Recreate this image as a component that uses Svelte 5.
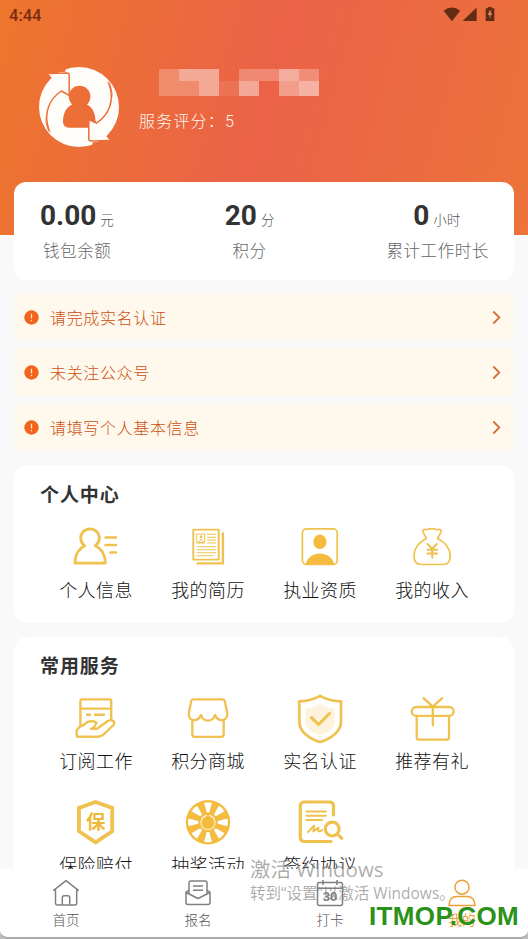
<script>
  const mosaic = [0.24, 0.44, 0.44, 0, 0.24, 0.24, 0.47, 0.27, 0.24, 0.24, 0.44, 0.09, 0.44, 0, 0.37, 0.5];
  const stats = [
    { value: '0.00', unit: '元', label: '钱包余额' },
    { value: '20', unit: '分', label: '积分' },
    { value: '0', unit: '小时', label: '累计工作时长' }
  ];
  const alerts = ['请完成实名认证', '未关注公众号', '请填写个人基本信息'];
  const personal = [
    ['user', '个人信息'], ['resume', '我的简历'], ['badge', '执业资质'], ['money', '我的收入']
  ];
  const services = [
    ['job', '订阅工作'], ['shop', '积分商城'], ['shield', '实名认证'], ['gift', '推荐有礼'],
    ['insure', '保险赔付'], ['wheel', '抽奖活动'], ['contract', '签约协议']
  ];
  const tabs = [['home', '首页'], ['mail', '报名'], ['calendar', '打卡'], ['me', '我的']];
</script>

{#snippet icon(name)}
  <svg class="icon" viewBox="0 0 48 48" width="48" height="48">
    {#if name === 'user'}
      <g stroke-width="2.8">
        <path d="M12.8 22.8A9.3 9.3 0 1 1 23.2 22.8C29.5 25.5 33.2 31.5 33.3 40.2H3C3.1 31.5 6.7 25.5 12.8 22.8" />
        <path d="M33.5 14.5H44M33.5 22H44M38.5 29.5H44" stroke-width="2.4" />
      </g>
    {:else if name === 'resume'}
      <g stroke-width="1.9">
        <rect x="9.3" y="6.6" width="25.4" height="30" />
        <path d="M13.5 40.4H38.9V10.5" stroke-width="2.4" />
        <rect x="13.2" y="11" width="7.5" height="9" stroke-width="1" />
        <circle class="fill" cx="17" cy="13.7" r="1.5" />
        <path d="M14.4 19.2L17 16L19.6 19.2Z" stroke-width="1" />
        <path d="M23.5 11.3H31.5M23.5 14.2H31.5M23.5 17H31.5M23.5 20H31.5M13 23.8H31.5M13 26.8H31.5M13 29.8H31.5M13 32.8H29" stroke-width="1.1" />
      </g>
    {:else if name === 'badge'}
      <rect x="6.4" y="5.9" width="34.8" height="35.6" rx="4" stroke-width="1.7" />
      <ellipse class="strong" cx="23.9" cy="18.8" rx="6.6" ry="7.2" />
      <path class="strong" d="M9.5 41C12 34 17 30.5 23.9 30.5S36 34 38.3 41Z" />
    {:else if name === 'money'}
      <g stroke-width="1.7">
        <path d="M18.5 15.5L14.5 8.2Q16 5.6 19 6.7Q23.8 4.4 28.8 6.7Q32.2 5.6 33.6 8.2L29.5 15.5C38 19.5 42.3 26.5 42.3 33Q42.3 41.5 35 41.5H13Q6 41.5 6 33C6 26.5 10 19.5 18.5 15.5Z" />
        <path d="M19.6 21L24.2 25.8L28.8 21M24.2 26V34.7M19.3 26.8H29.1M19.3 30.6H29.1" stroke-width="2" />
      </g>
    {:else if name === 'job'}
      <g stroke-width="2.4">
        <path d="M8.4 31.5V7Q8.4 5.4 10 5.4H37.5Q39.2 5.4 39.2 7V26M8.4 14.6H39.2M15 20.7H18M23 20.7H32" />
        <path d="M4.7 36.5Q7.5 31.5 11.5 31.2C15 27.5 20 26.5 24.5 28.5Q23 33.5 19 34.7H25L35.5 27.2C40 24.5 44 28 41.5 31L31.5 40.5Q29 42.6 25.5 42.7H6Q4.7 42.7 4.7 41Z" />
      </g>
    {:else if name === 'shop'}
      <g stroke-width="2.3">
        <path d="M9 5.3H38.5Q40.2 5.3 40.8 7L43.3 19.5C43.7 23 41 26.2 38 26.2Q33 26.2 31 21Q29.5 26.6 24 26.6T17 21Q15 26.2 10 26.2C6.5 26.2 4.3 23 4.8 19.5L7.2 7Q7.5 5.3 9 5.3Z" />
        <path d="M8.3 27V40.5Q8.3 42.8 10.6 42.8H37.2Q39.7 42.8 39.7 40.5V27" />
      </g>
    {:else if name === 'shield'}
      <path d="M24.1 1.9L27 3.4Q35 7.2 45 7.3V28C45 38 33.5 45.5 24.1 48C14.5 45.5 3.3 38 3.3 28V7.3Q13 7.2 21 3.4Z" stroke-width="2.7" />
      <path class="pale" d="M24 10Q31 14 38.5 14.5V28C38.5 35 31 39.5 24 41.5C17 39.5 9.5 35 9.5 28V14.5Q17 14 24 10Z" />
      <path d="M15.5 23.6L22.5 30.5L33.5 19.5" stroke-width="3" />
    {:else if name === 'gift'}
      <g stroke-width="2.3">
        <rect x="3.8" y="13" width="41.8" height="8.8" rx="4.4" />
        <path d="M8.7 22V43.5Q8.7 45.7 11 45.7H38.8Q41 45.7 41 43.5V22M24.8 12.5V31.5M15.5 4.2L24.8 12.7L34.2 4.2" />
      </g>
    {:else if name === 'insure'}
      <path class="sharp" d="M23.6 4L40.2 9.9V33.3L23.6 44.4L7 33.3V9.9Z" stroke-width="3.8" />
      <text x="23.7" y="30.7" text-anchor="middle">保</text>
    {:else if name === 'wheel'}
      <circle class="strong" cx="24" cy="24.3" r="22.2" />
      {#each [0, 45, 90, 135, 180, 225, 270, 315] as angle}
        <path class="hub" transform={`rotate(${angle} 24 24.3)`} d="M20.1 4.9Q24 3.8 27.9 4.9L25.3 14.6H22.7Z" />
      {/each}
      <circle class="hub" cx="24" cy="24.3" r="7.6" />
      <path class="strong" d="M24 14.5L25.6 18.2A6.6 6.6 0 1 1 22.4 18.2Z" />
    {:else}
      <g stroke-width="3.2">
        <path d="M37.5 17V8Q37.5 4 33.5 4H8.5Q4.3 4 4.3 8V39Q4.3 43.5 8.5 43.5H35" />
        <path d="M10.5 13.5H30M10.5 17.7H30M10.5 22H26" stroke-width="2" />
        <path d="M12 34L18.2 27.5L17.3 33.5L22.5 29.5L22 33Q24 34 26 32" stroke-width="1.9" />
        <circle cx="36.2" cy="31.1" r="6.9" />
        <path d="M41.5 36.4L45.8 40.2" />
      </g>
    {/if}
  </svg>
{/snippet}

{#snippet tile([name, label])}
  <div class="tile">
    {@render icon(name)}
    <span>{label}</span>
  </div>
{/snippet}

{#snippet arrow()}
  <path class="off" d="M4 0H26.5V5.8L14 6.5L9 13L0 26Z" />
  <path class="on" d="M9.3 7.8L28 6.5L30 8.5V29L22.3 25L10 36L.4 36.5Q2.5 23 13.9 13.3Z" />
  <path class="cut" d="M10 7.6L27.8 7Q30.2 7 30.2 9V29.5L22.3 25C10.5 33 4 47 9.8 63.5" />
  <path class="off" d="M6.2 49C6.8 55 8 59.5 12 66.5L9.2 65C7 59 6 54 6.2 49Z" />
{/snippet}

<div class="phone">
  <header>
    <div class="status">
      <span>4:44</span>
      <svg width="52" height="16" viewBox="0 0 52 16">
        <path d="M.6 3.8Q9-2.7 17.2 3.8L8.9 14.2Z" />
        <path d="M33.6.6V14H19.6Z" />
        <path d="M43 1.2H45V0H48.7V1.2H51.3V14H42.7V1.2Z" />
        <path class="bolt" d="M47 2.5L49.2 8H47.7L47 12L46.2 8H44.8Z" />
      </svg>
    </div>
    <div class="profile">
      <svg class="avatar" width="80" height="82" viewBox="0 0 80 82">
        <mask id="avatar-mask" maskUnits="userSpaceOnUse" x="0" y="0" width="80" height="82">
          <circle cx="40" cy="41" r="40" class="on" />
          {@render arrow()}
          <g transform="rotate(180 40 41)">{@render arrow()}</g>
          <path class="off" d="M33.2 38.5A10.8 10.8 0 1 1 48 38.5C53.5 41 57 48 56.5 57.5L50 54.5V61.8H30Q24 61 24 56C24 47 27.5 41 33.2 38.5Z" />
        </mask>
        <rect width="80" height="82" fill="#fffdfa" mask="url(#avatar-mask)" />
      </svg>
      <div class="who">
        <div class="mosaic">
          {#each mosaic as alpha}<i style={`opacity:${alpha}`}></i>{/each}
        </div>
        <p>服务评分：5</p>
      </div>
    </div>
  </header>

  <main>
    <section class="stats">
      {#each stats as s}
        <div class="stat">
          <div><b>{s.value}</b><small>{s.unit}</small></div>
          <span>{s.label}</span>
        </div>
      {/each}
    </section>
    <section class="alerts">
      {#each alerts as text}
        <div class="alert">
          <svg width="15" height="15" viewBox="0 0 15 15">
            <circle cx="7.5" cy="7.5" r="7.2" fill="#f0641c" />
            <path d="M7.5 3.7V8.6M7.5 10V11.3" stroke="#ffe3c4" stroke-width="1.3" />
          </svg>
          <span>{text}</span>
          <svg width="9" height="15" viewBox="0 0 9 15"><path d="M1.3 1.5L7.3 7.5L1.3 13.5" fill="none" stroke="#d0703a" stroke-width="1.8" /></svg>
        </div>
      {/each}
    </section>
    <section class="panel">
      <h2>个人中心</h2>
      <div class="grid">{#each personal as item}{@render tile(item)}{/each}</div>
    </section>
    <section class="panel common">
      <h2>常用服务</h2>
      <div class="grid">{#each services as item}{@render tile(item)}{/each}</div>
    </section>
  </main>

  <nav>
    {#each tabs as [name, label]}
      <div class="tab" class:active={name === 'me'}>
        <svg width="30" height="30" viewBox="0 0 30 30">
          {#if name === 'home'}
            <path d="M2.3 12.7L15 2.6L27.7 12.7M4.5 11V25Q4.5 27 6.5 27H23.7Q25.7 27 25.7 25V11M11.3 27V19.5Q11.3 17.7 13 17.7H17Q18.7 17.7 18.7 19.5V27" />
          {:else if name === 'mail'}
            <path d="M6 12L3 14V24.5Q3 26.5 5 26.5H25Q27 26.5 27 24.5V14L24 12M3 14.5L15 20.5L27 14.5M6 16V4.5Q6 3 7.5 3H22.5Q24 3 24 4.5V16M10 8H20M10 12.3H20" />
          {:else if name === 'calendar'}
            <rect x="2.5" y="4.5" width="25" height="23" rx="2" />
            <path d="M2.5 10.3H27.5M8 2V7M22 2V7" />
            <text x="15" y="23.2" text-anchor="middle">30</text>
          {:else}
            <circle cx="15" cy="9.2" r="7" />
            <path d="M2 27.5C2.2 21.5 5.5 18.5 10 18.5H20C24.5 18.5 27.8 21.5 28 27.5Z" />
          {/if}
        </svg>
        <span>{label}</span>
      </div>
    {/each}
  </nav>

  <div class="activate">
    <div>激活 Windows</div>
    <p>转到“设置”以激活 Windows。</p>
  </div>
  <div class="site">ITMOP.COM</div>
</div>

<style>
  .phone {
    position: relative;
    display: flex;
    flex-direction: column;
    width: 528px;
    height: 939px;
    box-sizing: border-box;
    overflow: hidden;
    background: #f9f9f9;
    border-bottom: 2px solid #aaa;
    border-radius: 0 0 9px 9px;
    color: #333;
    font-family: Roboto, "Noto Sans CJK SC", sans-serif;
  }
  :global(body) { background: #bbb; }
  header {
    flex: none;
    height: 235px;
    background: linear-gradient(105deg, #ed762c 0%, #eb6248 50%, #ec733a 100%);
  }
  .status {
    display: flex;
    justify-content: space-between;
    align-items: center;
    height: 30px;
    padding: 0 33px 0 9px;
    color: #7b2b12;
    font-size: 16.5px;
    font-weight: 500;
  }
  .status svg { fill: #632b14; margin-bottom: 1px; }
  .status .bolt { fill: #d9825c; }
  .profile { display: flex; gap: 20px; padding: 36px 39px; }
  .on { fill: #fff; }
  .off { fill: #000; }
  .cut { fill: none; stroke: #000; stroke-width: 1.5; }
  .mosaic {
    display: grid;
    grid-template-columns: repeat(8, 20px);
    grid-template-rows: 12px 15px;
    margin: 3px 0 0 20px;
  }
  .mosaic i { background: #fff; }
  .who p {
    margin: 14px 0 0;
    font-size: 16px;
    font-weight: 300;
    line-height: 24px;
    letter-spacing: 1.2px;
    color: #fff8f2;
  }
  main { flex: 1; min-height: 0; overflow: hidden; margin-top: -53px; padding: 0 14px; }
  .stats {
    display: flex;
    justify-content: space-between;
    height: 98px;
    box-sizing: border-box;
    padding: 16px 25px 0 26px;
    background: #fff;
    border-radius: 12px;
  }
  .stat { display: flex; flex-direction: column; align-items: center; }
  .stat:first-child { align-items: flex-start; }
  .stat:first-child span { margin-left: 3px; }
  .stat:nth-child(2) { margin-left: -1px; }
  .stat div { height: 36px; line-height: 36px; white-space: nowrap; }
  .stat:last-child div { margin-left: -2px; }
  .stat b { font-size: 28px; }
  .stat small { margin-left: 4px; font-size: 13.5px; font-weight: 300; color: #555; }
  .stat span { margin-top: 2px; font-size: 16.5px; font-weight: 300; line-height: 32px; letter-spacing: .6px; color: #666; }
  .alerts { display: flex; flex-direction: column; gap: 7px; padding: 13px 0 14px; }
  .alert {
    display: flex;
    align-items: center;
    height: 48px;
    padding: 0 13px 0 10px;
    background: #fff8ec;
    color: #cc5010;
    font-size: 16px;
    font-weight: 300;
    letter-spacing: .65px;
  }
  .alert span { flex: 1; margin-left: 11px; }
  .panel { padding: 16px 26px 20px; margin-bottom: 14px; background: #fff; border-radius: 14px; }
  .common { padding-top: 15px; }
  h2 { margin: 0; padding: 2px 0 14px; font-size: 19px; line-height: 26px; letter-spacing: .9px; }
  .grid { display: grid; grid-template-columns: repeat(4, 112px); row-gap: 24px; }
  .tile { display: flex; flex-direction: column; align-items: center; height: 80px; }
  .tile span { margin-top: 7px; font-size: 18px; font-weight: 300; line-height: 26px; letter-spacing: .4px; color: #111; }
  .icon { overflow: visible; fill: none; stroke: #efc14e; stroke-linecap: round; stroke-linejoin: round; }
  .sharp { stroke-linejoin: miter; }
  .fill { fill: #efc14e; stroke: none; }
  .strong { fill: #f4bb3e; stroke: none; }
  .pale { fill: #fdf3dc; stroke: none; }
  .hub { fill: #fff; stroke: none; }
  .icon text { fill: #efb93a; stroke: none; font-size: 19.5px; font-weight: 700; }
  nav { flex: none; display: flex; height: 68px; background: #fff; }
  .tab { flex: 1; display: flex; flex-direction: column; align-items: center; padding-top: 9px; color: #808080; }
  .tab svg { fill: none; stroke: currentColor; stroke-width: 1.5; stroke-linejoin: round; }
  .tab text { fill: currentColor; stroke: none; font: 700 13px "Liberation Sans", sans-serif; }
  .tab span { font-size: 13.5px; font-weight: 300; line-height: 22px; margin-top: 1px; color: #555; }
  .tab.active, .tab.active span { color: #eda03a; }
  .tab.active span { font-weight: 400; }
  .activate {
    position: absolute;
    left: 250px;
    top: 855px;
    color: rgba(130, 130, 130, .66);
    font-family: "Open Sans", "Noto Sans CJK SC", sans-serif;
    white-space: nowrap;
  }
  .activate div { font-size: 20.5px; line-height: 28px; }
  .activate p { margin: -1px 0 0; font-size: 15.5px; line-height: 22px; }
  .site {
    position: absolute;
    left: 369px;
    top: 901px;
    color: #2b9219;
    font: 700 26px/30px "Liberation Sans", Arial, sans-serif;
    letter-spacing: .35px;
  }
</style>
